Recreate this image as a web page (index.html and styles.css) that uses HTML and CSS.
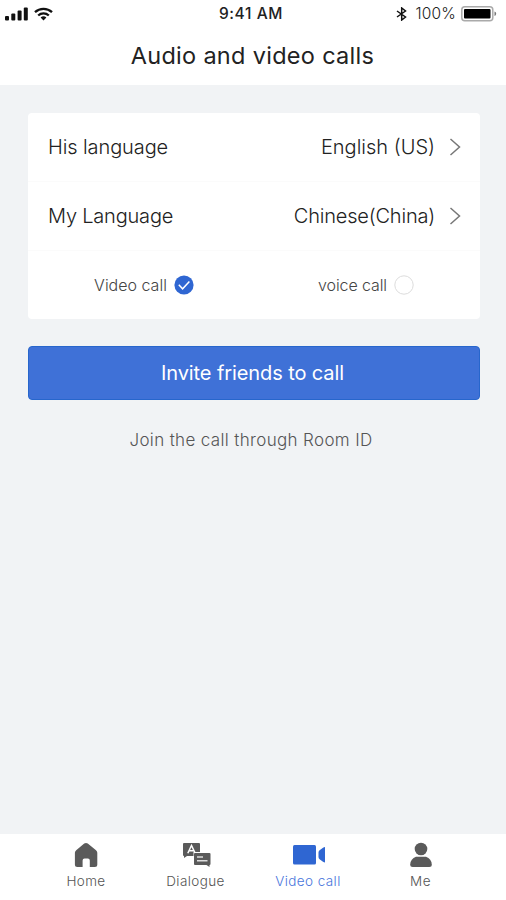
FILE: index.html
```html
<!DOCTYPE html>
<html lang="en">
<head>
  <meta charset="UTF-8" />
  <meta name="viewport" content="width=device-width, initial-scale=1" />
  <title>Audio and video calls</title>
  <link rel="stylesheet" href="styles.css">
</head>
<body>
  <header>
    <div class="status">
      <div class="status-left">
        <svg width="23" height="14" viewBox="0 0 23 14" fill="#111">
          <rect x="0" y="9" width="4" height="4.5" rx="1" />
          <rect x="6.3" y="6.5" width="4" height="7" rx="1" />
          <rect x="12.6" y="3.5" width="4" height="10" rx="1" />
          <rect x="18.8" y="0.5" width="4" height="13" rx="1" />
        </svg>
        <svg width="19" height="14" viewBox="0 0 19 14" fill="none" stroke="#111" stroke-width="2.3">
          <path d="M1 5.2a12.4 12.4 0 0 1 17 0" />
          <path d="M4.2 8.5a7.8 7.8 0 0 1 10.6 0" />
          <path d="M9.5 13.4L6.6 10.6a4.2 4.2 0 0 1 5.8 0z" fill="#111" stroke="none" />
        </svg>
      </div>
      <span class="time">9:41 AM</span>
      <div class="status-right">
        <svg width="11" height="14" viewBox="0 0 11 14" fill="none" stroke="#111" stroke-width="1.5">
          <path d="M1 4l8.5 6L5.7 13V1L9.5 4 1 10" />
        </svg>
        <span class="percent">100%</span>
        <svg width="36" height="16" viewBox="0 0 36 16">
          <rect x="0.8" y="0.8" width="31" height="14" rx="3" fill="#fff" stroke="#aaa" stroke-width="1.5" />
          <rect x="3" y="3" width="26.5" height="9.6" rx="1" fill="#000" />
          <path d="M33.5 5.5q1.7.6 1.7 2.3t-1.7 2.3z" fill="#777" />
        </svg>
      </div>
    </div>
    <h1>Audio and video calls</h1>
  </header>

  <main>
    <section class="card">
      <div class="row">
        <span class="his">His language</span>
        <span class="value">English (US)</span>
        <svg class="arrow" width="12" height="20" viewBox="0 0 12 20"><path d="M1.5 2l9 8-9 8" /></svg>
      </div>
      <div class="row my">
        <span>My Language</span>
        <span class="value">Chinese(China)</span>
        <svg class="arrow" width="12" height="20" viewBox="0 0 12 20"><path d="M1.5 2l9 8-9 8" /></svg>
      </div>
      <div class="options">
        <div class="option">
          <span>Video call</span>
          <svg width="20" height="20" viewBox="0 0 20 20">
            <circle cx="10" cy="10" r="9.6" fill="#2f66d2" />
            <path d="M4.8 9.8l3.8 4 6.8-7.2" fill="none" stroke="#fff" stroke-width="1.5" />
          </svg>
        </div>
        <div class="option voice">
          <span>voice call</span>
          <svg width="20" height="20" viewBox="0 0 20 20">
            <circle cx="10" cy="10" r="9.2" fill="#fff" stroke="#dcdcdc" />
          </svg>
        </div>
      </div>
    </section>

    <button type="button">Invite friends to call</button>
    <a class="join">Join the call through Room ID</a>
  </main>

  <nav>
    <a class="tab">
      <svg width="24" height="26" viewBox="0 0 24 26">
        <path d="M10.2 1.6q1.8-1.4 3.600 0l8.200 6.600q1.300 1 1.300 2.600V22.500q0 2.500-2.500 2.500H15.800V18.500q0-2-1.900-2h-3.400q-1.900 0-1.900 2V25H3.400Q.9 25 .9 22.500V10.800q0-1.600 1.300-2.600z" fill="#5a5a5a" />
      </svg>
      <span>Home</span>
    </a>
    <a class="tab dialogue">
      <svg width="30" height="26" viewBox="0 0 30 26">
        <path d="M2 1h15q1 0 1 1v8h-6.500v4H5l-3 2v-2q-1 0-1-1V2q0-1 1-1z" fill="#5a5a5a" />
        <path d="M5.800 11.300L9.500 3.500l3.700 7.800M7 8.800h5" fill="none" stroke="#fff" stroke-width="1.500" />
        <path d="M13 11h14.500q1 0 1 1v10q0 1-1 1v2l-3-2H13q-1 0-1-1V12q0-1 1-1z" fill="#5a5a5a" />
        <path d="M15 15h6M15 18.800h10.500" stroke="#ddd" stroke-width="1.400" />
      </svg>
      <span>Dialogue</span>
    </a>
    <a class="tab active">
      <svg width="34" height="26" viewBox="-1 0 34 26" fill="#2f66d2">
        <rect x="1" y="3" width="23" height="19.500" rx="1.500" />
        <path d="M33 5v15.500q-1 0-2-.700l-3.400-2.500q-1.100-.8-1.100-2.200V10.500q0-1.400 1.100-2.200L31 5.700q1-.700 2-.7z" />
      </svg>
      <span>Video call</span>
    </a>
    <a class="tab">
      <svg width="24" height="26" viewBox="0 0 24 26" fill="#5a5a5a">
        <circle cx="12" cy="7" r="6.300" />
        <path d="M7 14.800h10q5.500 2 5.800 7.700 0 2.500-2.500 2.500H3.700q-2.500 0-2.500-2.500Q1.500 16.800 7 14.800z" />
      </svg>
      <span>Me</span>
    </a>
  </nav>
</body>
</html>
```
FILE: styles.css
```css
* {
  box-sizing: border-box;
}

body {
  margin: 0;
  height: 900px;
  display: flex;
  flex-direction: column;
  font-family: Inter, "Liberation Sans", sans-serif;
  font-weight: 300;
  background-color: #f1f3f5;
  color: #222;
}

header {
  height: 85px;
  background-color: #fff;
}

svg {
  display: block;
  flex-shrink: 0;
}

.status {
  display: grid;
  grid-template-columns: 1fr auto 1fr;
  align-items: center;
  height: 27px;
  padding: 0 9px 0 5px;
}

.status-left,
.status-right {
  display: flex;
  align-items: center;
  gap: 6px;
}

.status-right {
  justify-content: flex-end;
  gap: 5px;
}

.time {
  font-size: 15.5px;
  font-weight: 500;
  letter-spacing: 0.6px;
}

.percent {
  font-size: 15.5px;
  letter-spacing: 0.2px;
}

.status-right .percent {
  margin-left: 3px;
}

h1 {
  margin: 0;
  height: 58px;
  padding-right: 1px;
  line-height: 58px;
  text-align: center;
  font-size: 23.5px;
  font-weight: 400;
  letter-spacing: 0.3px;
}

main {
  flex: 1;
  padding: 28px 26px 0 28px;
}

.card {
  height: 206px;
  background-color: #fff;
  border-radius: 4px;
}

.row {
  display: flex;
  align-items: center;
  height: 69px;
  padding: 0 19px 0 20px;
  font-size: 20px;
  border-bottom: 1px solid #fbfbfb;
}

.his {
  letter-spacing: -0.1px;
}

.my {
  letter-spacing: -0.2px;
}

.value {
  margin-left: auto;
  margin-right: 14px;
}

.arrow path {
  fill: none;
  stroke: #777;
  stroke-width: 1.5;
}

.options {
  display: flex;
  height: 68px;
  color: #444;
}

.option {
  flex: 1;
  display: flex;
  align-items: center;
  justify-content: center;
  gap: 7px;
  padding: 0 0 1px 5px;
  font-size: 16px;
}

.voice {
  padding: 0 3px 1px 0;
  letter-spacing: -0.1px;
}

button {
  display: block;
  width: 100%;
  height: 54px;
  margin: 27px 0 29px;
  padding: 0 9px 0 6px;
  border: 1px solid #2766cc;
  border-radius: 4px;
  background-color: #3f71d7;
  color: #fff;
  font-family: inherit;
  font-size: 20px;
  font-weight: 400;
  letter-spacing: -0.1px;
}

.join {
  display: block;
  padding-right: 6px;
  text-align: center;
  font-size: 17px;
  line-height: 22px;
  letter-spacing: 0.35px;
  color: #555;
}

nav {
  display: grid;
  grid-template-columns: 110px 111px 112px 113px;
  height: 66px;
  padding: 8px 29px 0 31px;
  background-color: #fff;
}

.tab {
  display: flex;
  flex-direction: column;
  align-items: center;
  font-size: 13.5px;
  line-height: 26px;
  letter-spacing: 0.4px;
  color: #555;
}

.dialogue span {
  margin-right: 2px;
}

.active {
  color: #4a76dc;
}
```
